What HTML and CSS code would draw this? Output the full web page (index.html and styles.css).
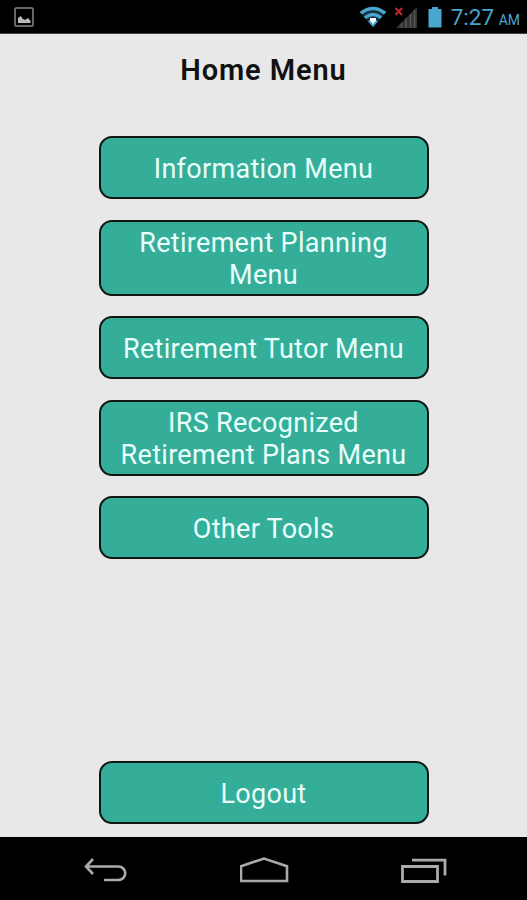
FILE: index.html
```
<!DOCTYPE html>
<html lang="en">
<head>
  <meta charset="UTF-8">
  <title>Home Menu</title>
  <meta name="viewport" content="width=device-width, initial-scale=1.0">
  <link rel="stylesheet" href="styles.css">
</head>
<body>
  <header class="status-bar">
    <svg class="picture" width="20" height="20" viewBox="0 0 20 20">
      <rect x="1" y="1" width="18" height="18" rx="1" fill="none" stroke="#888" stroke-width="1.5"/>
      <path d="M4 16V11L6.5 9L9 12L11 13L14 11L16.5 14V16Z" fill="#bbb"/>
    </svg>
    <div class="status-icons">
      <svg class="wifi" width="28" height="22" viewBox="0 0 28 22">
        <path d="M1 6.5Q14 -4.5 27 6.5L14 21Z" fill="#12303e"/>
        <g fill="none" stroke="#4aa5cf" stroke-width="3.4">
          <path d="M1.8 7.2Q14 -2.4 26.2 7.2"/>
          <path d="M5.8 11.8Q14 5.2 22.2 11.8"/>
        </g>
        <path d="M9 15.5Q14 10.5 19 15.5L14 21Z" fill="#4aa5cf"/>
        <path d="M11 12H17V14.5L14 18L11 14.5Z" fill="#fff"/>
      </svg>
      <svg width="24" height="22" viewBox="0 0 24 22">
        <path d="M2 22L23 1V22Z" fill="#333"/>
        <path d="M7.5 17V22M12 12.5V22M16.5 8V22M20.5 4V22" stroke="#555" stroke-width="1.5"/>
        <path d="M1.5 2L8 9M8 2L1.5 9" stroke="#c9202c" stroke-width="2"/>
      </svg>
      <svg width="14" height="22" viewBox="0 0 14 22">
        <path d="M4 1H10V3H13.5V21.5H.5V3H4Z" fill="#4aa5cf"/>
      </svg>
    </div>
    <span class="time">7:27 <small>AM</small></span>
  </header>

  <main>
    <h1>Home Menu</h1>
    <nav class="menu">
      <button>Information Menu</button>
      <button class="tall">Retirement Planning Menu</button>
      <button>Retirement Tutor Menu</button>
      <button class="tall">IRS Recognized<br>Retirement Plans Menu</button>
      <button>Other Tools</button>
    </nav>
    <button class="logout">Logout</button>
  </main>

  <footer class="nav-bar">
    <svg width="46" height="28" viewBox="0 0 46 28">
      <path d="M10 2L3 9.5L10 17M3.5 9.5H35.5A6.5 6.5 0 0 1 35.5 23H21" fill="none" stroke="#aaa" stroke-width="2.6"/>
    </svg>
    <svg width="50" height="28" viewBox="0 0 50 28">
      <path d="M1 9.3L24 1.5L47 9.3V24H1Z" fill="none" stroke="#aaa" stroke-width="2.6"/>
    </svg>
    <svg width="46" height="28" viewBox="0 0 46 28">
      <path d="M1.5 9.5H36.5V24.5H1.5ZM11 3.2H44V18.5" fill="none" stroke="#aaa" stroke-width="2.8"/>
    </svg>
  </footer>
</body>
</html>
```
FILE: styles.css
```
* { box-sizing: border-box; }
body { margin: 0; height: 900px; display: flex; flex-direction: column; background: #e8e8e8; font-family: Roboto, sans-serif; }
svg { display: block; }
.status-bar { height: 34px; padding: 0 7px 0 14px; display: flex; align-items: center; background: #000; border-bottom: 1px solid #444; color: #4aa5cf; }
.status-icons { display: flex; gap: 10px; margin-left: auto; margin-right: 9px; }
.wifi { margin-right: -3px; }
.time { padding-top: 4px; font-size: 22.5px; line-height: 30px; white-space: nowrap; word-spacing: -1px; }
.time small { font-size: 14px; }
main { flex: 1; display: flex; flex-direction: column; align-items: center; padding: 18px 0 13px; }
h1 { margin: 0 0 48px; font-size: 29px; line-height: 36px; font-weight: 600; letter-spacing: 0.9px; color: #111; }
.menu { display: flex; flex-direction: column; gap: 20.5px; }
button { width: 330px; height: 63px; padding: 2px 10px 0; border: 2px solid #0c1614; border-radius: 13px; background: #35ae99; color: #e8fffb; font-family: inherit; font-size: 27px; line-height: 32px; letter-spacing: 0.3px; }
.tall { height: 76px; }
.logout { margin-top: auto; }
.nav-bar { height: 63px; padding: 5px 80px 0 83px; display: flex; align-items: center; justify-content: space-between; background: #000; }
```
